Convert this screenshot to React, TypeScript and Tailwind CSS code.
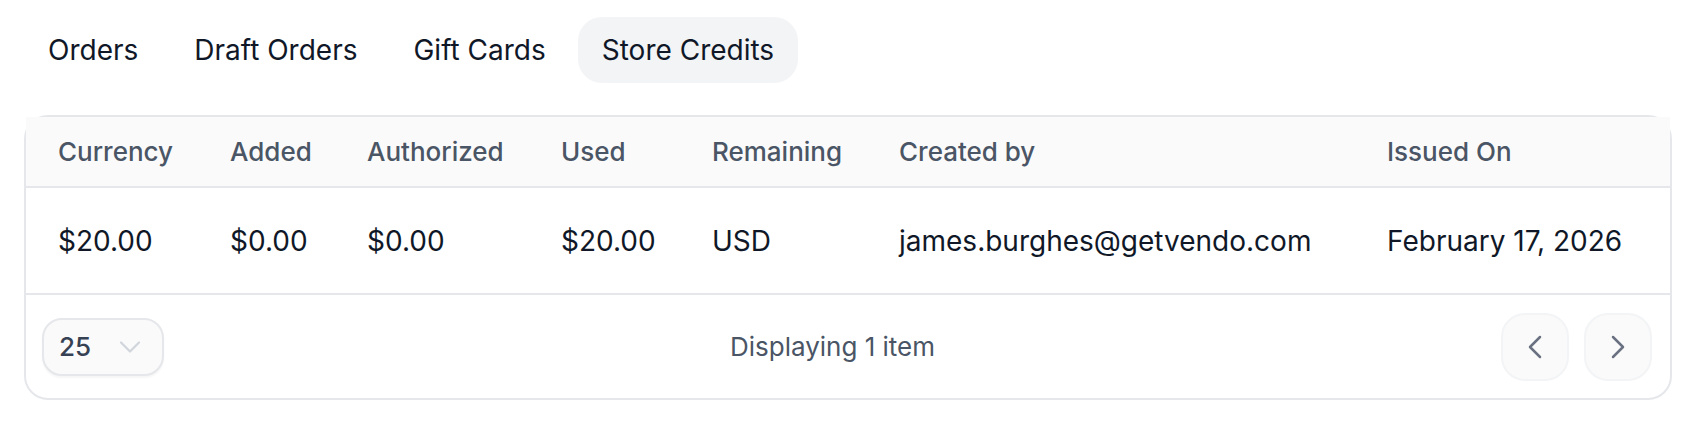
import { ChevronDown, ChevronLeft, ChevronRight } from 'lucide-react'

const tabs = ['Orders', 'Draft Orders', 'Gift Cards', 'Store Credits']
const active = 'Store Credits'

const columns = ['Currency', 'Added', 'Authorized', 'Used', 'Remaining', 'Created by', 'Issued On']

const rows = [
  ['$20.00', '$0.00', '$0.00', '$20.00', 'USD', 'james.burghes@getvendo.com', 'February 17, 2026'],
]

const grid = 'grid grid-cols-[172px_137px_194px_151px_187px_488px_1fr]'

export default function App() {
  return (
    <div className="min-h-[426px] bg-white px-6 pt-[17px] font-['Inter',_sans-serif] text-[28px] text-gray-900">
      <nav className="flex items-center gap-2">
        {tabs.map((tab) => (
          <button
            key={tab}
            className={
              'rounded-[24px] px-6 py-[13px] leading-[40px] ' +
              (tab === active ? 'bg-gray-100' : 'bg-transparent')
            }
          >
            {tab}
          </button>
        ))}
      </nav>

      <div className="mt-8 rounded-[24px] border-2 border-gray-200 bg-white">
        <div className={`${grid} h-[71px] items-center border-b-2 border-gray-200 bg-[#fafafa] text-[26px] font-medium text-gray-600`}>
          {columns.map((c) => (
            <div key={c} className="px-8">
              {c}
            </div>
          ))}
        </div>

        {rows.map((row, i) => (
          <div key={i} className={`${grid} h-[107px] items-center border-b-2 border-gray-200`}>
            {row.map((cell, j) => (
              <div key={j} className="whitespace-nowrap px-8">
                {cell}
              </div>
            ))}
          </div>
        ))}

        <div className="flex h-[103px] items-center pl-4 pr-[18px] text-[26px]">
          <button className="flex h-[58px] w-[122px] items-center rounded-[20px] border-2 border-gray-200 bg-[#fafafa] pl-[15px] shadow-[0_2px_2px_rgba(0,0,0,0.04)]">
            <span className="font-medium text-gray-700">25</span>
            <ChevronDown className="ml-auto mr-[14px] h-9 w-9 text-gray-300" strokeWidth={1.5} />
          </button>

          <div className="flex-1 text-center text-gray-600">Displaying 1 item</div>

          <div className="flex items-center gap-[15px]">
            <button className="flex h-[68px] w-[68px] items-center justify-center rounded-[24px] border-2 border-gray-100 bg-[#fafafa]">
              <ChevronLeft className="h-10 w-10 text-gray-500" strokeWidth={1.5} />
            </button>
            <button className="flex h-[68px] w-[68px] items-center justify-center rounded-[24px] border-2 border-gray-100 bg-[#fafafa]">
              <ChevronRight className="h-10 w-10 text-gray-500" strokeWidth={1.5} />
            </button>
          </div>
        </div>
      </div>
    </div>
  )
}
